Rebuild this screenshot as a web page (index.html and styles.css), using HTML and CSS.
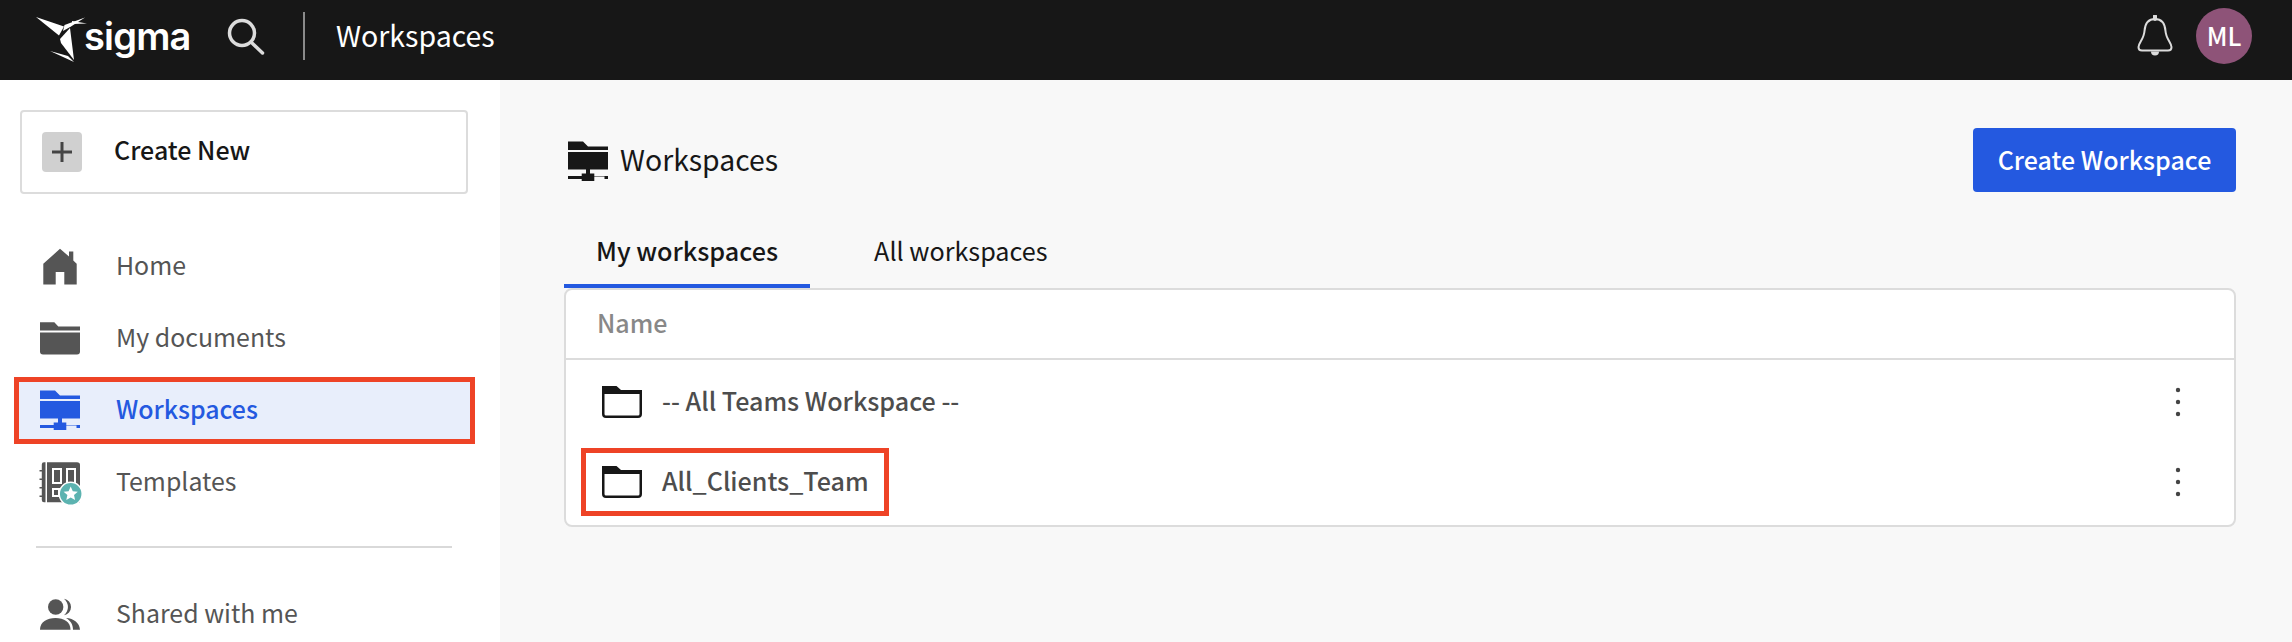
FILE: index.html
```html
<!DOCTYPE html>
<html lang="en">
<head>
<meta charset="utf-8">
<title>Workspaces</title>
<link rel="stylesheet" href="styles.css">
</head>
<body>
<svg class="defs" width="0" height="0" aria-hidden="true">
  <symbol id="ws" viewBox="0 0 44 44">
    <path d="M2 1.500H17L22 6.500H42V10H2Z"/>
    <path d="M2 12H42V29.500H24V33.500H28.300V36H42V39H38.500V36.500H28.300V41H15.700V39H5.500V39H2V36H15.700V33.500H20V29.500H2Z"/>
  </symbol>
  <symbol id="folder-line" viewBox="0 0 40 32">
    <path d="M0 0H14.500L19 4H40V8H0Z"/>
    <path d="M1.250 7V28Q1.250 30.750 4 30.750H36Q38.750 30.750 38.750 28V7" fill="none" stroke="currentColor" stroke-width="2.500"/>
  </symbol>
</svg>

<header class="topbar">
  <div class="logo">
    <svg class="logo-mark" width="54" height="46" viewBox="0 0 54 46">
      <path fill="#fff" d="M1 1L29 10.500L24 19.500Z"/>
      <path fill="#fff" d="M29.500 9L50 1.500L36 10.500L28 15Z"/>
      <path fill="#fff" d="M37 5L52 7.500L37 8Z"/>
      <path fill="#fff" d="M25 23L35 12L39 44L26 27Z"/>
      <path fill="#fff" d="M15 35L33 40L39 46Z"/>
    </svg>
    <span class="logo-word">sigma</span>
  </div>
  <svg class="search" width="38" height="38" viewBox="0 0 38 38" fill="none" stroke="#dcdcdc" stroke-width="3.500" stroke-linecap="round">
    <circle cx="15" cy="15" r="12.500"/>
    <path d="M24.500 24.500L35.500 35"/>
  </svg>
  <span class="top-divider"></span>
  <span class="top-title">Workspaces</span>
  <svg class="bell" width="36" height="42" viewBox="0 0 36 42" fill="none" stroke="#dcdcdc" stroke-width="2">
    <path d="M18 4C11 4 8 9 7.500 16C7 24 1.500 28 1.500 32C1.500 34.500 3 35.500 5 35.500H31C33 35.500 34.500 34.500 34.500 32C34.500 28 29 24 28.500 16C28 9 25 4 18 4Z"/>
    <path d="M18 1V4" stroke-width="4" stroke-linecap="round"/>
    <path d="M14 36.500A4 4 0 0 0 22 36.500Z" fill="#dcdcdc" stroke="none"/>
  </svg>
  <span class="avatar">ML</span>
</header>

<div class="app">
  <aside class="sidebar">
    <button class="create-new" type="button">
      <span class="plus-box">
        <svg width="20" height="20" viewBox="0 0 20 20"><path fill="#444" d="M8.500 0H11.500V8.500H20V11.500H11.500V20H8.500V11.500H0V8.500H8.500Z"/></svg>
      </span>
      <span class="create-label">Create New</span>
    </button>
    <nav class="nav">
      <a class="nav-item">
        <svg class="nav-icon" viewBox="0 0 44 44"><path d="M22 3.800L31 11.500V6.500H35.300V15.500L38.700 18.800V39.500H26.300V27H17.700V39.500H5.300V18.800Z"/></svg>
        <span class="label">Home</span>
      </a>
      <a class="nav-item">
        <svg class="nav-icon" viewBox="0 0 44 44"><path d="M2 5.200H16.300L20.300 9.500H42V13.500H2Z"/><path d="M2 15.500H42V34.500Q42 37.500 39 37.500H5Q2 37.500 2 34.500Z"/></svg>
        <span class="label">My documents</span>
      </a>
      <a class="nav-item active">
        <svg class="nav-icon"><use href="#ws"/></svg>
        <span class="label">Workspaces</span>
      </a>
      <a class="nav-item">
        <svg class="nav-icon" viewBox="0 0 44 44">
          <path d="M6 1.200H7.500V41.200H6Q3.800 41.200 3.800 39V36H1.500V34.500H3.800V27.500H1.500V26H3.800V19H1.500V17.500H3.800V10.500H1.500V9H3.800V3.400Q3.800 1.200 6 1.200Z"/>
          <path d="M9 1.200H39Q42 1.200 42 4V41.200H9Z"/>
          <g fill="none" stroke="#fff" stroke-width="2">
            <rect x="15" y="8" width="8" height="14"/>
            <rect x="29" y="8" width="8" height="14"/>
            <rect x="15" y="28" width="6" height="7"/>
          </g>
          <circle cx="32.700" cy="32.800" r="11.500" fill="#5cb3b0" stroke="#fff" stroke-width="1.500"/>
          <path fill="#fff" d="M32.700 25.500L34.800 30.200L39.800 30.700L36 34L37.100 39L32.700 36.400L28.300 39L29.400 34L25.600 30.700L30.600 30.200Z"/>
        </svg>
        <span class="label">Templates</span>
      </a>
      <hr class="nav-divider">
      <a class="nav-item">
        <svg class="nav-icon" viewBox="0 0 44 44">
          <circle cx="17.700" cy="14" r="7.700"/>
          <path d="M26 5.800A8.300 8.300 0 0 1 26 22.200A10.500 10.500 0 0 0 26 5.800Z"/>
          <path d="M2 36.700C2 29 9 25 17.500 25S32.500 29 32.500 36.700Z"/>
          <path d="M28 25C36 25.500 41.500 30 42 36.700H35C35 31.500 32.500 27.500 28 25Z"/>
        </svg>
        <span class="label">Shared with me</span>
      </a>
    </nav>
  </aside>

  <main class="main">
    <div class="title-row">
      <div class="title">
        <svg class="title-icon"><use href="#ws"/></svg>
        <h1>Workspaces</h1>
      </div>
      <button class="primary" type="button">Create Workspace</button>
    </div>
    <div class="tabs">
      <a class="tab selected">My workspaces</a>
      <a class="tab">All workspaces</a>
    </div>
    <section class="table">
      <div class="table-head">Name</div>
      <div class="table-body">
        <div class="row">
          <div class="cell">
            <svg class="row-icon"><use href="#folder-line"/></svg>
            <span class="cell-label">-- All Teams Workspace --</span>
          </div>
          <svg class="kebab" viewBox="0 0 6 30"><circle cx="3" cy="3" r="2.200"/><circle cx="3" cy="15" r="2.200"/><circle cx="3" cy="27" r="2.200"/></svg>
        </div>
        <div class="row">
          <div class="cell marked">
            <svg class="row-icon"><use href="#folder-line"/></svg>
            <span class="cell-label">All_Clients_Team</span>
          </div>
          <svg class="kebab" viewBox="0 0 6 30"><circle cx="3" cy="3" r="2.200"/><circle cx="3" cy="15" r="2.200"/><circle cx="3" cy="27" r="2.200"/></svg>
        </div>
      </div>
    </section>
  </main>
</div>
</body>
</html>
```

FILE: styles.css
```css
* { box-sizing: border-box; }

html, body {
  margin: 0;
  height: 642px;
  overflow: hidden;
}

body {
  display: flex;
  flex-direction: column;
  font-family: "Noto Sans CJK JP", "Noto Sans", sans-serif;
  color: #171717;
  background: #f8f8f8;
}

.defs { position: absolute; }

.label { padding-bottom: 6px; }
.cell-label { padding-bottom: 4px; }

.topbar {
  flex: none;
  height: 80px;
  display: flex;
  align-items: center;
  padding: 0 40px 0 35px;
  background: #171717;
  color: #fff;
}

.logo { display: flex; align-items: center; width: 155px; }
.logo-mark { flex: none; margin-top: -2px; }
.logo-word {
  margin-left: -5px;
  margin-top: -8px;
  font-family: Inter, sans-serif;
  font-size: 38px;
  font-weight: 600;
  letter-spacing: -0.8px;
  line-height: 1;
}

.search { flex: none; margin: -6px 37px 0 37px; }

.top-divider {
  flex: none;
  width: 2px;
  height: 48px;
  margin-top: -8px;
  margin-left: 1px;
  background: #8a8a8a;
}

.top-title {
  margin-left: 31px;
  margin-top: -9px;
  font-size: 28.500px;
  font-weight: 400;
  line-height: 1;
}

.bell { flex: none; margin-left: auto; margin-top: -8px; }

.avatar {
  flex: none;
  width: 56px;
  height: 56px;
  margin: -8px 0 0 23px;
  padding-bottom: 3px;
  display: flex;
  align-items: center;
  justify-content: center;
  border-radius: 50%;
  background: #8e5378;
  color: #fff;
  font-size: 25px;
  font-weight: 500;
}

.app { flex: 1; display: flex; min-height: 0; }

.sidebar {
  flex: none;
  width: 500px;
  padding: 30px 25px 0 14px;
  background: #fff;
}

.create-new {
  width: 448px;
  height: 84px;
  margin-left: 6px;
  display: flex;
  align-items: center;
  gap: 32px;
  padding: 0 0 0 20px;
  background: #fff;
  border: 2px solid #dcdcdc;
  border-radius: 4px;
  font: inherit;
  font-size: 25px;
  font-weight: 500;
  color: #171717;
}

.create-label { padding-bottom: 6px; }

.plus-box {
  width: 40px;
  height: 40px;
  display: flex;
  align-items: center;
  justify-content: center;
  background: #d0d0d0;
  border-radius: 4px;
}

.nav {
  margin-top: 39px;
  display: flex;
  flex-direction: column;
  gap: 5px;
}

.nav-item {
  height: 67px;
  display: flex;
  align-items: center;
  gap: 34px;
  padding-left: 19px;
  border: 5px solid transparent;
  font-size: 24.900px;
  color: #555;
}

.nav-icon {
  flex: none;
  width: 44px;
  height: 44px;
  fill: #555;
}

.nav-item.active {
  border-color: #ee4326;
  background: #e8eefb;
  color: #2459e0;
  font-weight: 500;
}

.nav-item.active .nav-icon { fill: #2459e0; }

.nav-divider {
  width: 416px;
  height: 2px;
  margin: 25px 0 28px 22px;
  border: 0;
  background: #d9d9d9;
}

.main {
  flex: 1;
  min-width: 0;
  padding: 48px 56px 0 64px;
}

.title-row {
  display: flex;
  align-items: center;
  justify-content: space-between;
}

.title { display: flex; align-items: center; gap: 10px; margin-left: 2px; }

.title-icon { width: 44px; height: 44px; fill: #171717; margin-top: 3px; }

.title h1 {
  margin: 0 0 2px;
  font-size: 28.400px;
  font-weight: 400;
  line-height: 1;
}

.primary {
  width: 263px;
  height: 64px;
  padding: 0 0 3px;
  border: 0;
  border-radius: 4px;
  background: #2459e0;
  color: #fff;
  font: inherit;
  font-size: 25px;
  font-weight: 500;
}

.tabs {
  margin-top: 30px;
  display: flex;
  gap: 32px;
}

.tab {
  height: 66px;
  padding: 0 32px 7px;
  display: flex;
  align-items: center;
  border-bottom: 4px solid transparent;
  font-size: 25.200px;
}

.tab.selected {
  border-bottom-color: #2459e0;
  font-weight: 500;
}

.table {
  height: 239px;
  background: #fff;
  border: 2px solid #dcdcdc;
  border-radius: 8px;
}

.table-head {
  height: 70px;
  display: flex;
  align-items: center;
  padding: 0 0 4px 31px;
  border-bottom: 2px solid #dcdcdc;
  font-size: 25px;
  font-weight: 500;
  color: #888;
}

.table-body { padding-top: 2px; }

.row {
  height: 80px;
  display: flex;
  align-items: center;
  justify-content: space-between;
  padding: 0 53px 0 15px;
}

.cell {
  height: 68px;
  display: inline-flex;
  align-items: center;
  gap: 20px;
  padding: 0 15px 0 16px;
  border: 5px solid transparent;
  font-size: 25.100px;
  font-weight: 500;
  color: #4d4d4d;
}

.cell.marked { border-color: #ee4326; }

.row-icon {
  flex: none;
  width: 40px;
  height: 32px;
  fill: #171717;
  color: #171717;
}

.kebab {
  flex: none;
  width: 6px;
  height: 30px;
  fill: #444;
}
```
